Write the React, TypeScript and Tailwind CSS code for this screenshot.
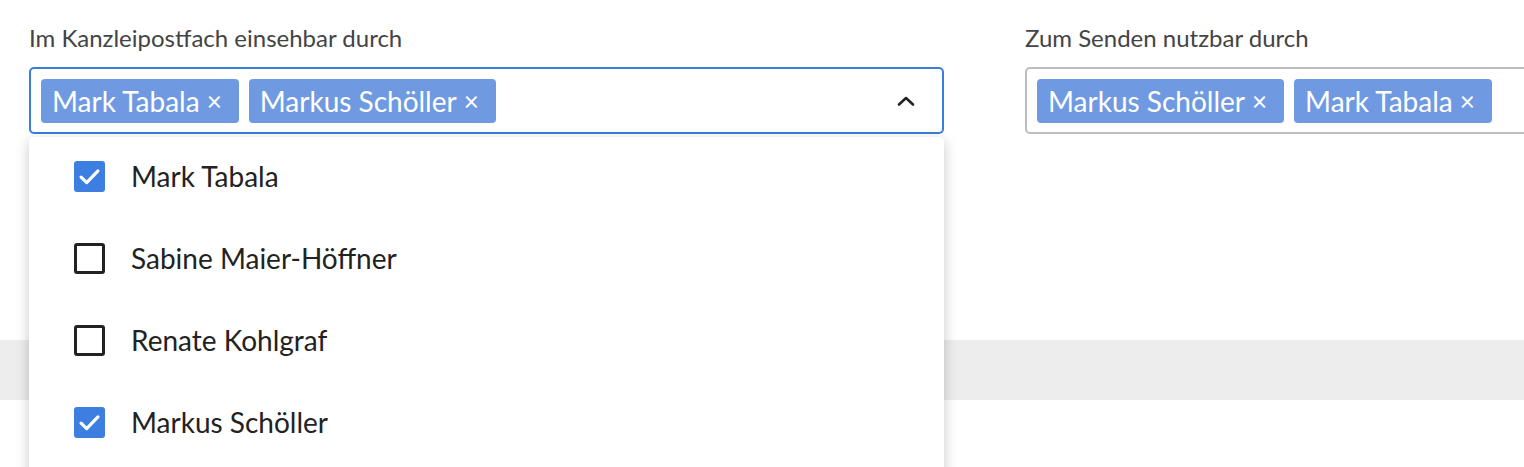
import { useState } from "react"

type Person = { id: string, name: string }

const people: Person[] = [
    { id: "mt", name: "Mark Tabala" },
    { id: "sm", name: "Sabine Maier-Höffner" },
    { id: "rk", name: "Renate Kohlgraf" },
    { id: "ms", name: "Markus Schöller" },
]

const Tag = ({ label }: { label: string }) => (
    <span className="flex h-[44px] shrink-0 items-center gap-[7px] rounded-[4px] bg-[#6f9ae2] pl-[11px] pr-[17px] text-[28px] leading-none text-white">
        {label}
        <span className="text-[26px] leading-none">×</span>
    </span>
)

const Check = ({ checked }: { checked: boolean }) =>
    checked ? (
        <span className="flex h-[31px] w-[31px] items-center justify-center rounded-[3px] bg-[#3d7fe0]">
            <svg width="27" height="27" viewBox="0 0 24 24" fill="none" stroke="white" strokeWidth="2.8" strokeLinecap="round" strokeLinejoin="round">
                <path d="M4.5 12.5l5 5L19.5 7" />
            </svg>
        </span>
    ) : (
        <span className="h-[31px] w-[31px] rounded-[3px] border-[3px] border-[#222]" />
    )

export default function App() {
    const [selected, setSelected] = useState<string[]>(["mt", "ms"])

    const toggle = (id: string) => {
        setSelected((s) => (s.includes(id) ? s.filter((x) => x !== id) : [...s, id]))
    }

    return (
        <div className="relative h-[467px] w-[1524px] overflow-hidden bg-white font-['Lato','Liberation_Sans',sans-serif]">
            <div className="flex gap-[81px] pl-[29px] pt-[23px]">
                <div className="w-[915px] shrink-0">
                    <div className="mb-[15px] h-[29px] text-[24px] leading-[29px] text-[#444]">Im Kanzleipostfach einsehbar durch</div>
                    <div className="flex h-[67px] items-center gap-[10px] rounded-[5px] border-2 border-[#3b7ddd] pl-[10px] pr-[26px]">
                        {selected.map((id) => (
                            <Tag key={id} label={people.find((p) => p.id === id)!.name} />
                        ))}
                        <svg className="ml-auto" width="20" height="12" viewBox="0 0 20 12" fill="none" stroke="#222" strokeWidth="2.6" strokeLinecap="round" strokeLinejoin="round">
                            <path d="M3 9.5l7-6.5 7 6.5" />
                        </svg>
                    </div>
                </div>
                <div className="w-[915px] shrink-0">
                    <div className="mb-[15px] h-[29px] text-[24px] leading-[29px] text-[#444]">Zum Senden nutzbar durch</div>
                    <div className="flex h-[67px] items-center gap-[10px] rounded-[5px] border-2 border-[#bdbdbd] pl-[10px]">
                        <Tag label="Markus Schöller" />
                        <Tag label="Mark Tabala" />
                    </div>
                </div>
            </div>

            <div className="mt-[206px] h-[60px] w-full bg-[#ededed]" />

            <div className="absolute left-[29px] top-[137px] w-[915px] rounded-[5px] bg-white pb-[40px] shadow-[0_4px_14px_rgba(0,0,0,0.22)]">
                {people.map((p) => (
                    <div key={p.id} onClick={() => toggle(p.id)} className="flex h-[82px] cursor-pointer items-center gap-[26px] pb-[4px] pl-[45px] text-[28px] leading-none text-[#222]">
                        <Check checked={selected.includes(p.id)} />
                        <span>{p.name}</span>
                    </div>
                ))}
            </div>
        </div>
    )
}
